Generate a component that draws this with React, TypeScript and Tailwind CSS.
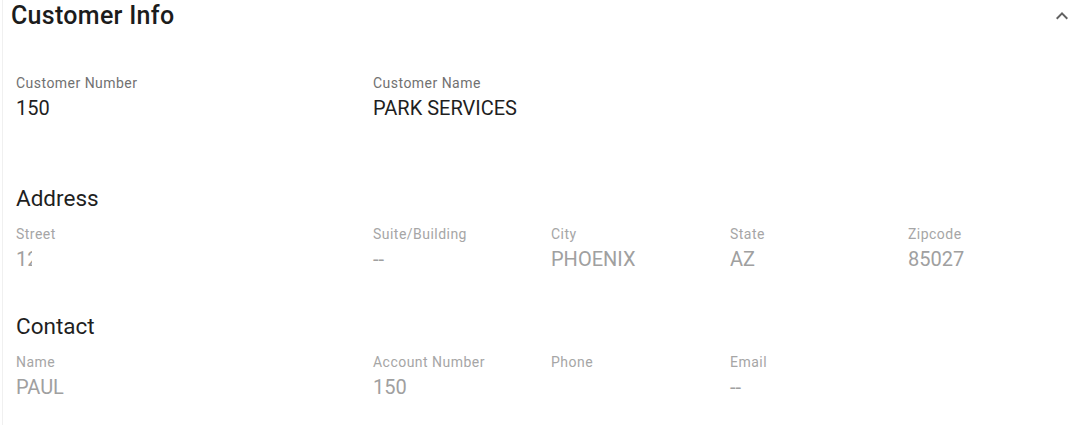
type Field = { label: string; value?: string; clip?: boolean };

const cols = 'grid grid-cols-[357px_178px_179px_178px_1fr]';

const ExpandLess = () => (
  <svg viewBox="0 0 24 24" className="mt-1 w-6 h-6 fill-[#616161]" aria-hidden>
    <path d="M12 8l-6 6 1.41 1.41L12 10.83l4.59 4.58L18 14z" />
  </svg>
);

const FieldCell = ({ label, value, disabled, clip }: Field & { disabled?: boolean }) => (
  <div className="flex flex-col gap-[3.5px]">
    <span className={`text-[14px] leading-5 tracking-[0.47px] ${disabled ? 'text-[#a6a6a6]' : 'text-[#717171]'}`}>
      {label}
    </span>
    <span
      className={`text-[20px] leading-6 h-6 ${disabled ? 'text-[#a0a0a0]' : 'text-[#1f1f1f]'} ${clip ? 'w-[16px] overflow-hidden whitespace-nowrap' : ''}`}
    >
      {value}
    </span>
  </div>
);

const Section = ({ title, fields }: { title: string; fields: Field[] }) => (
  <section className="flex flex-col gap-[11.5px]">
    <h3 className="text-[22.5px] leading-7 text-[#1f1f1f]">{title}</h3>
    <div className={cols}>
      {fields.map((f) => (
        <FieldCell key={f.label} {...f} disabled />
      ))}
    </div>
  </section>
);

export default function App() {
  return (
    <main
      className="w-[1077px] h-[425px] bg-white overflow-hidden"
      style={{ fontFamily: 'Roboto, "Noto Sans", sans-serif' }}
    >
      <div className="h-full ml-[2px] border-l border-[#f0f0f0] flex flex-col">
        <header className="flex items-start justify-between pl-[8px] pr-[3px]">
          <h2 className="text-[25px] leading-8 font-medium tracking-[0.3px] text-[#1c1c1c]">Customer Info</h2>
          <ExpandLess />
        </header>

        <div className="flex flex-col pl-[13px] pt-[40.5px]">
          <div className={cols}>
            <FieldCell label="Customer Number" value="150" />
            <FieldCell label="Customer Name" value="PARK SERVICES" />
          </div>

          <div className="mt-16">
            <Section
              title="Address"
              fields={[
                { label: 'Street', value: '1234 W', clip: true },
                { label: 'Suite/Building', value: '--' },
                { label: 'City', value: 'PHOENIX' },
                { label: 'State', value: 'AZ' },
                { label: 'Zipcode', value: '85027' },
              ]}
            />
          </div>

          <div className="mt-[41px]">
            <Section
              title="Contact"
              fields={[
                { label: 'Name', value: 'PAUL' },
                { label: 'Account Number', value: '150' },
                { label: 'Phone', value: '' },
                { label: 'Email', value: '--' },
              ]}
            />
          </div>
        </div>
      </div>
    </main>
  );
}
